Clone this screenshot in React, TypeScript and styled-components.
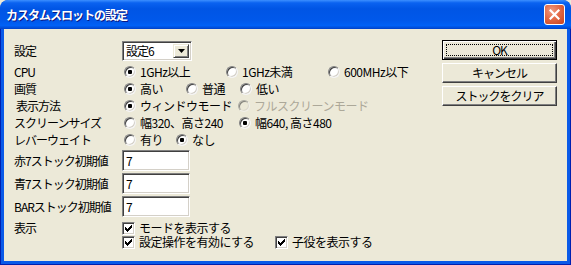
import styled, { createGlobalStyle } from "styled-components";

const GlobalStyle = createGlobalStyle`
  html, body {
    margin: 0;
    padding: 0;
    background: #ece9d8;
  }
  body {
    font-family: "Noto Sans CJK JP", "DejaVu Sans", sans-serif;
    font-size: 12px;
    line-height: 14px;
    color: #000;
  }
`;

const Window = styled.div`
  width: 571px;
  height: 265px;
  display: flex;
  flex-direction: column;
  overflow: hidden;
  background: #0055e5;
  border-radius: 8px 8px 0 0;
`;

const TitleBar = styled.div`
  height: 29px;
  flex-shrink: 0;
  display: flex;
  align-items: center;
  justify-content: space-between;
  padding: 0 6px 0 6px;
  border-radius: 8px 8px 0 0;
  background: linear-gradient(
    to bottom,
    #3c8fff 0%,
    #0a62f0 10%,
    #0055e5 30%,
    #0058ea 70%,
    #0061f6 88%,
    #0050dc 95%,
    #0040c8 100%
  );
`;

const Title = styled.span`
  color: #fff;
  font-weight: bold;
  font-size: 12px;
  letter-spacing: -1px;
  text-shadow: 1px 1px 0 #0a1883;
  padding-top: 1px;
`;

const CloseButton = styled.div`
  width: 21px;
  height: 21px;
  box-sizing: border-box;
  border: 1px solid #fff;
  border-radius: 3px;
  background: radial-gradient(
    circle at 35% 30%,
    #f09a80 0%,
    #e36a47 45%,
    #c9421c 100%
  );
  display: flex;
  align-items: center;
  justify-content: center;
`;

const Frame = styled.div`
  flex: 1;
  display: flex;
  padding: 0 3px 3px 3px;
  border: 1px solid #0020b0;
  border-top: none;
  background: #0a5ae8;
`;

const Client = styled.div`
  flex: 1;
  display: flex;
  background: #ece9d8;
  padding: 0 10px 0 10px;
`;

const Form = styled.div`
  display: flex;
  flex-direction: column;
  padding-top: 12px;
`;

const Row = styled.div<{ $h: number; $mt?: number }>`
  display: flex;
  align-items: center;
  height: ${(p) => p.$h}px;
  margin-top: ${(p) => p.$mt ?? 0}px;
`;

const Label = styled.div<{ $indent?: number }>`
  width: 108px;
  flex-shrink: 0;
  padding-left: ${(p) => p.$indent ?? 0}px;
  box-sizing: border-box;
  letter-spacing: -1px;
  white-space: nowrap;
`;

const Controls = styled.div`
  display: flex;
  align-items: center;
`;

const Option = styled.div<{ $w?: number; $disabled?: boolean }>`
  display: flex;
  align-items: center;
  width: ${(p) => (p.$w ? `${p.$w}px` : "auto")};
  flex-shrink: 0;
  color: ${(p) => (p.$disabled ? "#aca899" : "#000")};
  white-space: nowrap;
  letter-spacing: -0.5px;
`;

const RadioCircle = styled.span<{ $on?: boolean; $disabled?: boolean }>`
  width: 12px;
  height: 12px;
  box-sizing: border-box;
  margin-left: 2px;
  margin-right: 4px;
  border-radius: 50%;
  border: 1px solid;
  border-color: #808080 #f4f4f4 #f4f4f4 #808080;
  box-shadow: inset 1px 1px 0 #404040, inset -1px -1px 0 #d4d0c8;
  background: ${(p) => (p.$disabled ? "#ece9d8" : "#fff")};
  display: flex;
  align-items: center;
  justify-content: center;
  opacity: ${(p) => (p.$disabled ? 0.6 : 1)};

  &::after {
    content: "";
    display: ${(p) => (p.$on ? "block" : "none")};
    width: 4px;
    height: 4px;
    border-radius: 1px;
    background: #000;
  }
`;

const CheckBox = styled.span`
  width: 13px;
  height: 13px;
  box-sizing: border-box;
  margin-right: 4px;
  border: 1px solid;
  border-color: #808080 #fff #fff #808080;
  box-shadow: inset 1px 1px 0 #404040, inset -1px -1px 0 #d4d0c8;
  background: #fff;
  display: flex;
  align-items: center;
  justify-content: center;
`;

const Combo = styled.div`
  width: 70px;
  height: 20px;
  box-sizing: border-box;
  border: 1px solid;
  border-color: #808080 #fff #fff #808080;
  box-shadow: inset 1px 1px 0 #404040, inset -1px -1px 0 #d4d0c8;
  background: #fff;
  display: flex;
  align-items: center;
  justify-content: space-between;
  padding: 2px 2px 2px 3px;
  letter-spacing: -1px;
`;

const DropButton = styled.span`
  width: 16px;
  height: 14px;
  box-sizing: border-box;
  background: #ece9d8;
  border: 1px solid;
  border-color: #ece9d8 #404040 #404040 #ece9d8;
  box-shadow: inset 1px 1px 0 #fff, inset -1px -1px 0 #808080;
  display: flex;
  align-items: center;
  justify-content: center;
`;

const TextBox = styled.div`
  width: 68px;
  height: 21px;
  box-sizing: border-box;
  border: 1px solid;
  border-color: #808080 #fff #fff #808080;
  box-shadow: inset 1px 1px 0 #404040, inset -1px -1px 0 #d4d0c8;
  background: #fff;
  padding: 0 3px;
  display: flex;
  align-items: center;
`;

const Buttons = styled.div`
  margin-left: auto;
  padding-top: 11px;
  display: flex;
  flex-direction: column;
  gap: 3px;
`;

const Button = styled.div<{ $default?: boolean }>`
  width: 115px;
  height: 20px;
  box-sizing: border-box;
  position: relative;
  display: flex;
  align-items: center;
  justify-content: center;
  background: #ece9d8;
  border: 1px solid;
  border-color: ${(p) =>
    p.$default ? "#000" : "#fff #404040 #404040 #fff"};
  box-shadow: ${(p) =>
    p.$default
      ? "inset 1px 1px 0 #fff, inset -1px -1px 0 #404040, inset -2px -2px 0 #808080"
      : "inset -1px -1px 0 #808080"};
  letter-spacing: -1px;

  &::after {
    content: "";
    display: ${(p) => (p.$default ? "block" : "none")};
    position: absolute;
    inset: 3px;
    border: 1px dotted #000;
  }
`;

const Radio = ({
  label,
  on,
  w,
  disabled,
}: {
  label: string;
  on?: boolean;
  w?: number;
  disabled?: boolean;
}) => (
  <Option $w={w} $disabled={disabled}>
    <RadioCircle $on={on} $disabled={disabled} />
    {label}
  </Option>
);

const Check = ({ label, w }: { label: string; w?: number }) => (
  <Option $w={w}>
    <CheckBox>
      <svg width="7" height="7" viewBox="0 0 7 7" shapeRendering="crispEdges">
        <path
          d="M0 2 H1 V3 H2 V4 H3 V3 H4 V2 H5 V1 H6 V0 H7 V3 H6 V4 H5 V5 H4 V6 H3 V7 H2 V6 H1 V5 H0 Z"
          fill="#000"
        />
      </svg>
    </CheckBox>
    {label}
  </Option>
);

const App = () => {
  return (
    <>
      <GlobalStyle />
      <Window>
        <TitleBar>
          <Title>カスタムスロットの設定</Title>
          <CloseButton>
            <svg width="11" height="11" viewBox="0 0 11 11">
              <path
                d="M1.5 1.5 L9.5 9.5 M9.5 1.5 L1.5 9.5"
                stroke="#fff"
                strokeWidth="2.2"
                strokeLinecap="square"
              />
            </svg>
          </CloseButton>
        </TitleBar>
        <Frame>
          <Client>
            <Form>
              <Row $h={20}>
                <Label>設定</Label>
                <Combo>
                  設定6
                  <DropButton>
                    <svg width="7" height="4" viewBox="0 0 7 4">
                      <path d="M0 0 H7 L3.5 4 Z" fill="#000" />
                    </svg>
                  </DropButton>
                </Combo>
              </Row>
              <Row $h={17} $mt={2}>
                <Label>CPU</Label>
                <Controls>
                  <Radio label="1GHz以上" on w={102} />
                  <Radio label="1GHz未満" w={102} />
                  <Radio label="600MHz以下" />
                </Controls>
              </Row>
              <Row $h={17}>
                <Label>画質</Label>
                <Controls>
                  <Radio label="高い" on w={62} />
                  <Radio label="普通" w={54} />
                  <Radio label="低い" />
                </Controls>
              </Row>
              <Row $h={17}>
                <Label $indent={2}>表示方法</Label>
                <Controls>
                  <Radio label="ウィンドウモード" on w={114} />
                  <Radio label="フルスクリーンモード" disabled />
                </Controls>
              </Row>
              <Row $h={17}>
                <Label>スクリーンサイズ</Label>
                <Controls>
                  <Radio label="幅320、高さ240" w={115} />
                  <Radio label="幅640, 高さ480" on />
                </Controls>
              </Row>
              <Row $h={17}>
                <Label>レバーウェイト</Label>
                <Controls>
                  <Radio label="有り" w={52} />
                  <Radio label="なし" on />
                </Controls>
              </Row>
              <Row $h={21} $mt={2}>
                <Label>赤7ストック初期値</Label>
                <TextBox>7</TextBox>
              </Row>
              <Row $h={21} $mt={2}>
                <Label>青7ストック初期値</Label>
                <TextBox>7</TextBox>
              </Row>
              <Row $h={21} $mt={2}>
                <Label>BARストック初期値</Label>
                <TextBox>7</TextBox>
              </Row>
              <Row $h={14} $mt={4}>
                <Label>表示</Label>
                <Controls>
                  <Check label="モードを表示する" />
                </Controls>
              </Row>
              <Row $h={14}>
                <Label />
                <Controls>
                  <Check label="設定操作を有効にする" w={153} />
                  <Check label="子役を表示する" />
                </Controls>
              </Row>
            </Form>
            <Buttons>
              <Button $default>OK</Button>
              <Button>キャンセル</Button>
              <Button>ストックをクリア</Button>
            </Buttons>
          </Client>
        </Frame>
      </Window>
    </>
  );
};

export default App;
